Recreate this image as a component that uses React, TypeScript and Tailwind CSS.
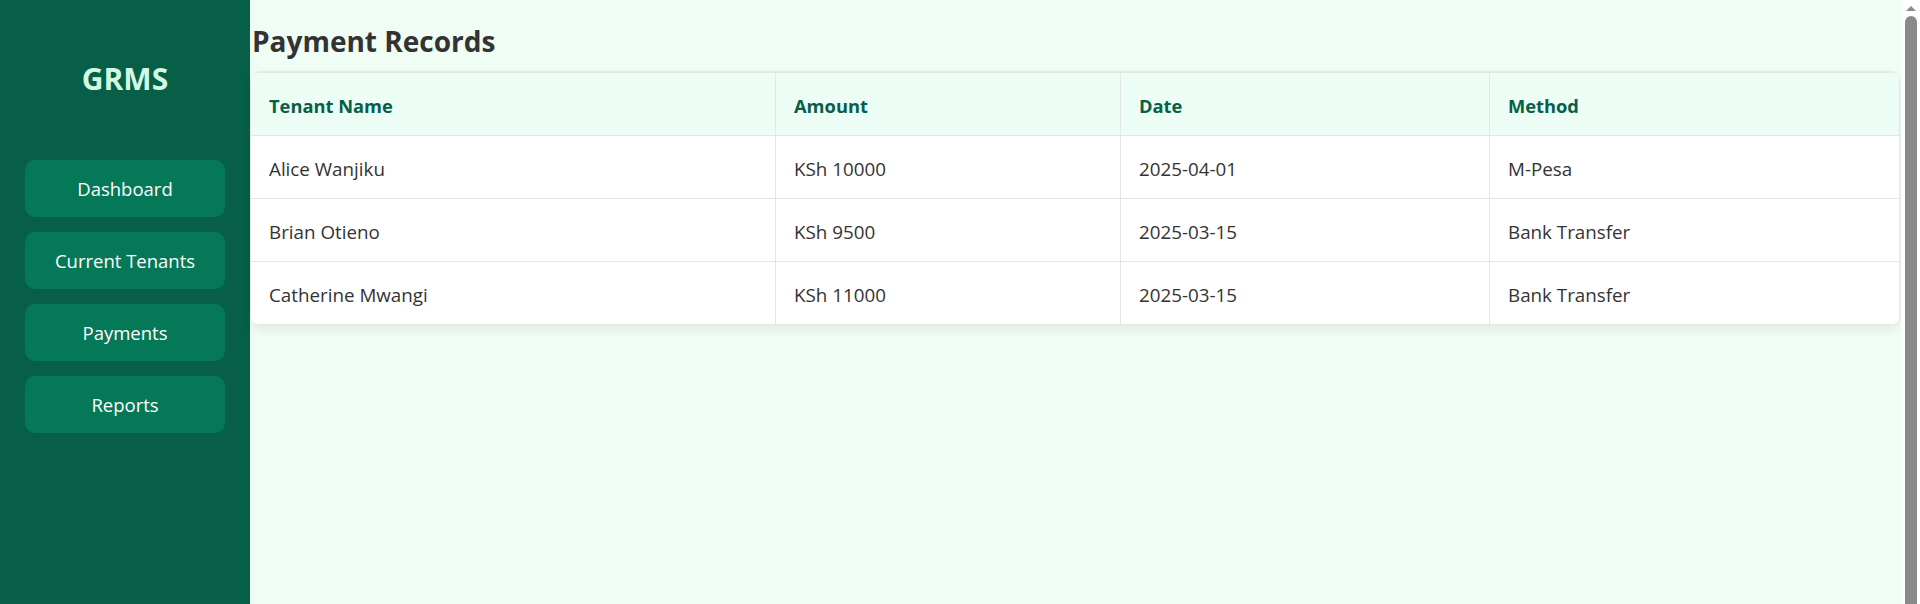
export default function App() {
  const nav = ["Dashboard", "Current Tenants", "Payments", "Reports"];
  const rows = [
    ["Alice Wanjiku", "KSh 10000", "2025-04-01", "M-Pesa"],
    ["Brian Otieno", "KSh 9500", "2025-03-15", "Bank Transfer"],
    ["Catherine Mwangi", "KSh 11000", "2025-03-15", "Bank Transfer"],
  ];
  const heads = ["Tenant Name", "Amount", "Date", "Method"];
  return (
    <div className="flex h-screen min-h-[604px] font-['Open_Sans',sans-serif]">
      <aside className="w-[250px] shrink-0 bg-[#065f46] flex flex-col items-center">
        <div className="mt-[59px] text-[30px] leading-[40px] font-bold text-[#d1fae5]">GRMS</div>
        <nav className="mt-[61px] flex flex-col gap-[15px]">
          {nav.map((n) => (
            <button
              key={n}
              className="w-[200px] h-[57px] rounded-[10px] bg-[#047857] text-white text-[18.5px] flex items-center justify-center"
            >
              {n}
            </button>
          ))}
        </nav>
      </aside>
      <main className="flex-1 bg-[#f0fdf4] pr-[1px]">
        <h1 className="mt-[23px] mb-[13px] pl-[2px] text-[28px] leading-[36px] font-bold text-[#333333]">
          Payment Records
        </h1>
        <div className="rounded-[10px] bg-white overflow-hidden shadow-[0_-1px_0_rgba(0,0,0,0.05),0_4px_12px_rgba(0,0,0,0.08)]">
          <table className="w-full table-fixed border-collapse text-[18.8px]">
            <colgroup>
              <col className="w-[525px]" />
              <col className="w-[345px]" />
              <col className="w-[369px]" />
              <col />
            </colgroup>
            <thead>
              <tr className="h-[63px] bg-[#ecfdf5]">
                {heads.map((h) => (
                  <th
                    key={h}
                    className="border border-[#e5e5e5] px-[18px] pt-[4px] text-left text-[18.3px] font-bold text-[#065f46]"
                  >
                    {h}
                  </th>
                ))}
              </tr>
            </thead>
            <tbody>
              {rows.map((r) => (
                <tr key={r[0]} className="h-[63px]">
                  {r.map((c, i) => (
                    <td key={i} className="border border-[#e5e5e5] px-[18px] pt-[4px] text-[#333333]">
                      {c}
                    </td>
                  ))}
                </tr>
              ))}
            </tbody>
          </table>
        </div>
      </main>
      <div className="w-[19px] shrink-0 bg-white flex flex-col items-end pr-[3px]">
        <div className="h-[16px] w-[12px] flex items-center justify-center">
          <div className="w-0 h-0 border-l-[5px] border-r-[5px] border-b-[5px] border-l-transparent border-r-transparent border-b-[#8a8a8a]" />
        </div>
        <div className="flex-1 w-[12px] rounded-t-[6px] bg-[#8a8a8a]" />
      </div>
    </div>
  );
}
